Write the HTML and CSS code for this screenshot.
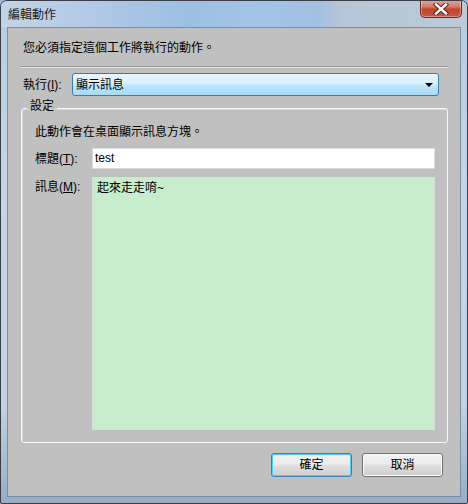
FILE: index.html
```html
<!DOCTYPE html>
<html lang="zh-Hant">
<head>
	<meta charset="UTF-8">
	<title>編輯動作</title>
	<link rel="stylesheet" href="styles.css">
</head>
<body>
	<div class="window">
		<div class="titlebar">
			<span class="title">編輯動作</span>
			<div class="close">
				<svg width="18" height="12" viewBox="0 0 18 12">
					<path d="M4 1.5 L14 10.5 M14 1.5 L4 10.5" stroke="#5a2a24" stroke-width="4.4" stroke-linecap="square"/>
					<path d="M4 1.5 L14 10.5 M14 1.5 L4 10.5" stroke="#fff" stroke-width="2.4" stroke-linecap="square"/>
				</svg>
			</div>
		</div>
		<div class="client">
			<p class="intro">您必須指定這個工作將執行的動作。</p>
			<div class="sep"></div>
			<div class="row">
				<label class="lbl">執行(<u>I</u>):</label>
				<div class="combo">
					<span>顯示訊息</span>
					<span class="arrow"></span>
				</div>
			</div>
			<fieldset class="group">
				<legend>設定</legend>
				<p class="desc">此動作會在桌面顯示訊息方塊。</p>
				<div class="field">
					<label class="flbl">標題(<u>T</u>):</label>
					<div class="textbox">test</div>
				</div>
				<div class="field msg">
					<label class="flbl">訊息(<u>M</u>):</label>
					<div class="memo">起來走走唷~</div>
				</div>
			</fieldset>
			<div class="buttons">
				<div class="btn default">確定</div>
				<div class="btn">取消</div>
			</div>
		</div>
	</div>
</body>
</html>
```

FILE: styles.css
```css
*{
	margin:0;
	padding:0;
	box-sizing:border-box;
}

body{
	width:468px;
	height:504px;
	font-family:"Liberation Sans","Noto Sans CJK TC",sans-serif;
	font-size:12px;
	color:#000;
	background:#9fb6cf;
}

.window{
	width:468px;
	height:504px;
	border:1px solid #3a3e46;
	border-radius:7px 7px 2px 2px;
	background:linear-gradient(to bottom,#b6cbe2 0,#c6d5e5 40%,#c2d2e3 80%,#97adc6 100%);
	display:flex;
	flex-direction:column;
	overflow:hidden;
}

.titlebar{
	height:26px;
	display:flex;
	justify-content:space-between;
	align-items:flex-start;
	background:linear-gradient(90deg,#c3d4e7 0,#b0c9e6 20%,#9dbfe4 40%,#a3c4e8 55%,#a2c0e2 68%,#b6c6d6 73%,#bccad8 100%);
}

.title{
	padding:6px 0 0 7px;
	line-height:16px;
	color:#1a1a1a;
}

.close{
	width:42px;
	height:18px;
	margin:-1px 5px 0 0;
	border:1px solid #6e2a22;
	border-top:none;
	border-radius:0 0 5px 5px;
	background:linear-gradient(to bottom,#e3a899 0,#d37a68 40%,#c0442e 55%,#c85a44 100%);
	box-shadow:inset 0 0 0 1px rgba(255,255,255,0.35);
	display:flex;
	align-items:center;
	justify-content:center;
}

.client{
	flex:1;
	margin:0 6px 6px 6px;
	border:1px solid #7b8ea4;
	background:#c0c0c0;
	display:flex;
	flex-direction:column;
}

.intro{
	margin:12px 0 0 15px;
	line-height:16px;
}

.sep{
	margin:10px 12px 0 12px;
	height:2px;
	border-top:1px solid #9c9c9c;
	border-bottom:1px solid #e2e2e2;
}

.row{
	margin-top:5px;
	padding-left:15px;
	display:flex;
	align-items:center;
	height:23px;
}

.lbl{
	width:49px;
	line-height:16px;
}

.combo{
	width:367px;
	height:23px;
	border:1px solid #3d7bad;
	border-radius:3px;
	background:linear-gradient(to bottom,#eaf6fd 0,#d9f0fc 45%,#bee6fd 55%,#a7d9f5 100%);
	display:flex;
	align-items:center;
	justify-content:space-between;
	padding:0 5px 0 3px;
	line-height:16px;
}

.arrow{
	width:0;
	height:0;
	border-left:4px solid transparent;
	border-right:4px solid transparent;
	border-top:4px solid #000;
	margin-top:1px;
}

.group{
	margin:2px 12px 0 13px;
	border:1px solid #f6f9fb;
	border-radius:3px;
	box-shadow:inset 1px 1px 0 #d0d6dc;
	padding:0 12px 12px 13px;
	min-width:0;
}

.group legend{
	margin-left:-8px;
	padding:0 3px 4px 3px;
	line-height:16px;
}

.desc{
	margin-top:6px;
	line-height:16px;
}

.field{
	display:flex;
	margin-top:8px;
	align-items:center;
}

.flbl{
	width:57px;
	line-height:16px;
}

.textbox{
	flex:1;
	height:21px;
	border:1px solid #d8dde2;
	background:#fff;
	padding:0 2px;
	line-height:19px;
}

.msg{
	align-items:flex-start;
}

.msg .flbl{
	padding-top:2px;
}

.memo{
	flex:1;
	height:253px;
	border:1px solid #d8dde2;
	background:#c7edcc;
	padding:2px 4px;
	line-height:16px;
}

.buttons{
	margin-top:10px;
	padding-right:17px;
	display:flex;
	justify-content:flex-end;
	gap:10px;
}

.btn{
	width:81px;
	height:24px;
	border:1px solid #707070;
	border-radius:3px;
	background:linear-gradient(to bottom,#f2f2f2 0,#ebebeb 45%,#dddddd 55%,#cfcfcf 100%);
	box-shadow:inset 0 0 0 1px #fcfcfc;
	text-align:center;
	line-height:22px;
}

.btn.default{
	border-color:#3c7fb1;
	box-shadow:inset 0 0 0 1px #48d1f8;
}
```
